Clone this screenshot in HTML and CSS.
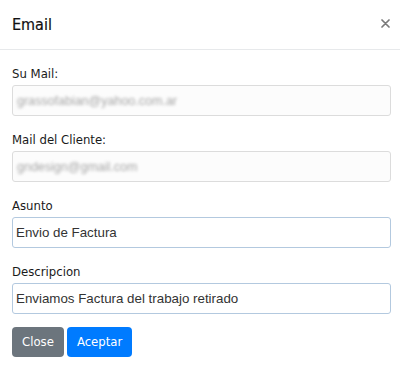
FILE: index.html
```html
<!DOCTYPE html>
<html lang="es">
<head>
<meta charset="utf-8">
<title>Email</title>
<link rel="stylesheet" href="styles.css">
</head>
<body>
<div class="modal">
  <div class="modal-header">
    <h5 class="modal-title">Email</h5>
    <button class="close" type="button" aria-label="Close">
      <svg width="9" height="9" viewBox="0 0 9 9"><path d="M1 1L8 8M8 1L1 8" stroke="#7a7a7a" stroke-width="1.7" stroke-linecap="round"/></svg>
    </button>
  </div>
  <div class="modal-body">
    <div class="form-group">
      <label class="label">Su Mail:</label>
      <div class="field readonly"><span class="blurred">grassofabian@yahoo.com.ar</span></div>
    </div>
    <div class="form-group">
      <label class="label">Mail del Cliente:</label>
      <div class="field readonly"><span class="blurred">gndesign@gmail.com</span></div>
    </div>
    <div class="form-group">
      <label class="label">Asunto</label>
      <input class="field editable" type="text" value="Envio de Factura">
    </div>
    <div class="form-group">
      <label class="label">Descripcion</label>
      <input class="field editable" type="text" value="Enviamos Factura del trabajo retirado">
    </div>
    <div class="actions">
      <button class="btn btn-secondary" type="button">Close</button>
      <button class="btn btn-primary" type="button">Aceptar</button>
    </div>
  </div>
</div>
</body>
</html>
```
FILE: styles.css
```css
* { box-sizing: border-box; }
html, body { margin: 0; padding: 0; background: #fff; }
body {
  font-family: "DejaVu Sans Condensed", "DejaVu Sans", sans-serif;
  color: #212529;
  width: 400px;
  height: 371px;
  overflow: hidden;
}
.modal-header {
  height: 50px;
  padding: 0 10px 0 12px;
  display: flex;
  align-items: center;
  justify-content: space-between;
  border-bottom: 1px solid #e7e9eb;
}
.modal-title {
  margin: 0;
  font-size: 16px;
  font-weight: normal;
  line-height: 1;
  color: #111;
  -webkit-text-stroke: 0.2px #111;
}
.close {
  border: 0;
  background: none;
  padding: 0;
  width: 9px;
  height: 9px;
  display: flex;
  margin-top: -2px;
}
.modal-body {
  padding: 13px 9px 0 12px;
}
.form-group {
  margin-bottom: 13px;
}
.label {
  display: block;
  font-size: 13px;
  line-height: 22px;
  color: #1a1a1a;
}
.field {
  display: flex;
  align-items: center;
  width: 100%;
  height: 31px;
  margin: 0;
  padding: 0 3px;
  border: 1px solid #dcdcdc;
  border-radius: 3px;
  background: #fff;
  font-family: "Liberation Sans", Arial, sans-serif;
  font-size: 13.333px;
  color: #333;
  outline: none;
}
.readonly {
  background: #fcfcfc;
  padding-left: 4px;
}
.editable {
  border-color: #b3c9df;
}
.blurred {
  color: #a6a6a6;
  filter: blur(1.4px);
  font-size: 12.5px;
}
.actions {
  display: flex;
  gap: 3px;
}
.btn {
  height: 30px;
  padding: 0 10px;
  border: 0;
  border-radius: 4px;
  color: #fff;
  font-family: "DejaVu Sans Condensed", "DejaVu Sans", sans-serif;
  font-size: 13px;
  line-height: 30px;
}
.btn-secondary { background: #6c757d; }
.btn-primary { background: #007bff; }
```
